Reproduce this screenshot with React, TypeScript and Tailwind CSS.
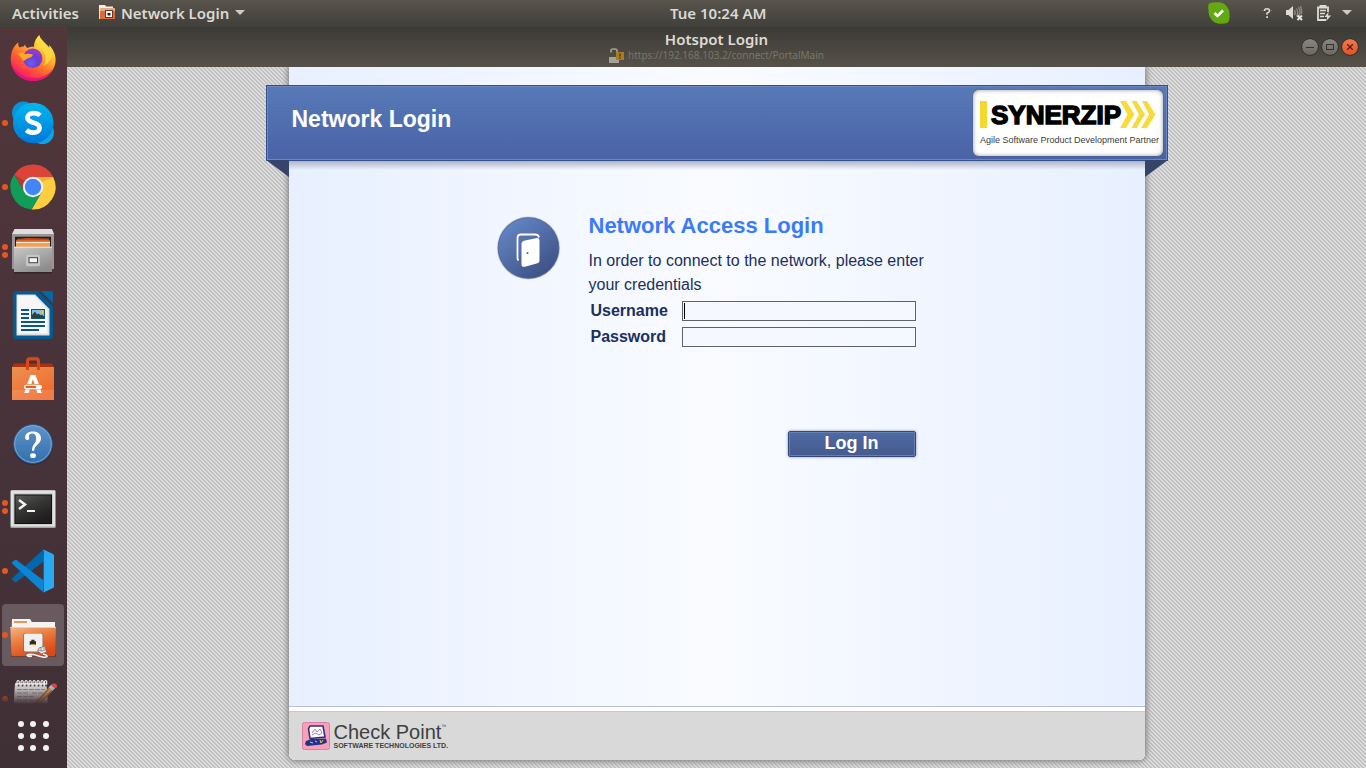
import type { ReactNode } from "react";

function Firefox() {
  return (
    <svg viewBox="0 0 48 48" className="size-12" aria-hidden="true">
      <defs>
        <linearGradient id="ffBody" x1="0.8" y1="0.1" x2="0.25" y2="0.95">
          <stop offset="0" stopColor="#fff04a" />
          <stop offset="0.3" stopColor="#ffb82e" />
          <stop offset="0.6" stopColor="#ff6a2c" />
          <stop offset="0.85" stopColor="#ff3350" />
          <stop offset="1" stopColor="#e6127c" />
        </linearGradient>
        <radialGradient id="ffGlobe" cx="0.4" cy="0.75" r="0.8">
          <stop offset="0" stopColor="#6a5cf0" />
          <stop offset="0.5" stopColor="#6b3fd0" />
          <stop offset="1" stopColor="#a733e0" />
        </radialGradient>
      </defs>
      <path d="M9.3 7.3C9 10 9.600 11.400 10.600 12.400c1.600-.8 3-1.100 4.200-1l1.300-2.100c.2 1.900.9 3 2.300 3.700 2-.8 4.200-1.400 6.600-1.200C25 6.500 27.500 2.500 30.300 0c1 4 4 6.500 6.700 9.300 1.300 1.300 2.200 2.500 2.900 3.900.5-1 .4-2 .2-3.200 4 4 6.500 9.500 6.500 14.500C46.600 36.800 36.500 46 24 46S1.800 36.500 1.800 24.500C1.800 17.500 4 11.500 9.300 7.300z" fill="url(#ffBody)" />
      <path d="M2.500 30C5 39.500 13.500 46 24 46c10.500 0 19-6.500 21.800-15.500C42.500 38 35 43 25.500 43 15.500 43 7 38.500 2.500 30z" fill="#e3107c" opacity=".8" />
      <circle cx="23.700" cy="23.300" r="9.700" fill="url(#ffGlobe)" />
      <path d="M27.500 14.500c3.500-1.500 7 1 8.500 4.500 1.800 4.500.5 9-2.500 12 6.500-2.300 10.500-8 9-14.500C41 11.500 35 8 31.500 3c-2.800 3-4.200 7.200-4 11.500z" fill="#ffd93f" opacity=".85" />
      <path d="M7.700 18.300c3-1.600 6.300-1 8.500.9 2.400-.8 5-.6 7.800.3-.4 2.200-2.700 3.300-5.200 3.800-1.800.8-2.600 2.600-4.800 2.400-1.400-3.200-3.500-5.500-6.300-7.400z" fill="#ffa52b" />
      <path d="M14 26c-1 3 1 6.500 4 7.500-3.500.5-7-1.500-8.500-4.500" fill="#ff5a3c" opacity=".6" />
    </svg>
  );
}

function Skype() {
  return (
    <svg viewBox="0 0 48 48" className="size-12" aria-hidden="true">
      <defs>
        <linearGradient id="skBody" x1="0" y1="0" x2="0" y2="1">
          <stop offset="0" stopColor="#00b7f1" />
          <stop offset="1" stopColor="#0078d7" />
        </linearGradient>
      </defs>
      <circle cx="14.500" cy="14" r="11.500" fill="#0a93d6" />
      <circle cx="33.500" cy="33.500" r="11.500" fill="#0fa4e6" />
      <circle cx="24.300" cy="24" r="20.300" fill="url(#skBody)" />
      <path d="M31.200 16.300c-1.800-1.600-4-2.200-6.500-2.200-3.600 0-6.200 1.700-6.200 4.700 0 2.900 2.400 3.900 6 4.900 3.800 1 6.100 2 6.100 5 0 3.200-2.700 4.900-6.300 4.900-2.700 0-5-.8-6.900-2.500" fill="none" stroke="#fff" strokeWidth="4.800" />
    </svg>
  );
}

function Chrome() {
  return (
    <svg viewBox="0 0 48 48" className="size-12" aria-hidden="true">
      <path d="M5.260 11.540A22.500 22.500 0 0 1 44.160 14H24L15.340 29z" fill="#db4437" />
      <path d="M44.160 14A22.500 22.500 0 0 1 22.580 46.460L32.660 29 24 14z" fill="#ffcd40" />
      <path d="M22.580 46.460A22.500 22.500 0 0 1 5.260 11.540L15.340 29h17.320z" fill="#0f9d58" />
      <path d="M24 14h20.160l-12 5.500z" fill="#b98a10" opacity=".35" />
      <path d="M5.260 11.540L15.340 29l.8-11z" fill="#3e2723" opacity=".25" />
      <circle cx="24" cy="24" r="10.200" fill="#f1f1f1" />
      <circle cx="24" cy="24" r="8.200" fill="#4285f4" />
    </svg>
  );
}

function Files() {
  return (
    <svg viewBox="0 0 48 48" className="size-12" aria-hidden="true">
      <defs>
        <linearGradient id="flFront" x1="0" y1="0" x2="0.6" y2="1">
          <stop offset="0" stopColor="#c9c9c9" />
          <stop offset="1" stopColor="#8d8d8d" />
        </linearGradient>
      </defs>
      <rect x="5" y="44" width="38" height="2.500" rx="1" fill="#20161a" opacity=".5" />
      <path d="M3 6.500h42V42H3z" fill="#979797" />
      <path d="M5.500 2h37.500L45 7H3z" fill="#dedede" />
      <rect x="6" y="9.700" width="36" height="11" fill="#25201d" />
      <path d="M8 12l10-1 22 .5V20H8z" fill="#c4461b" />
      <rect x="7" y="13.300" width="34" height="7" fill="#e37230" />
      <rect x="7" y="15" width="34" height="1.300" fill="#fff3e0" />
      <rect x="7" y="16.300" width="34" height="3.500" fill="#f5a04c" />
      <path d="M5 19.700h38V45H5z" fill="url(#flFront)" />
      <path d="M5 19.700h38v1H5z" fill="#e9e9e9" />
      <rect x="17" y="27.700" width="14" height="11.500" rx="1.500" fill="#c6c6c6" />
      <rect x="19.500" y="30.200" width="9.500" height="6" fill="#444" />
      <rect x="20.500" y="31.200" width="7.500" height="4" fill="#f4f4f4" />
    </svg>
  );
}

function Writer() {
  return (
    <svg viewBox="0 0 48 48" className="size-12" aria-hidden="true">
      <path d="M7 0h22l15 15.500V45a3 3 0 0 1-3 3H7a3 3 0 0 1-3-3V3a3 3 0 0 1 3-3z" fill="#045a92" />
      <path d="M30 0L44 14" stroke="#4a343a" strokeWidth="1.500" />
      <path d="M31.700 0H42a2 2 0 0 1 2 2v10.300z" fill="#0668a6" />
      <path d="M7.500 3.500h18.700L40.500 18v26.500h-33z" fill="#dedede" />
      <path d="M8.500 4.500h16.800L38.500 18.500v24h-30z" fill="#f7f7f7" />
      <path d="M12 18h8v2h-8zM12 22h8v2h-8zM12 26h8v2h-8zM12 30h24v2H12zM12 34h24v2H12zM12 38h18v2H12z" fill="#0b5687" />
      <rect x="22" y="18" width="14" height="10" fill="#0b5687" />
      <rect x="23" y="19" width="12" height="8" fill="#7fc0e8" />
      <circle cx="33" cy="21" r="1.700" fill="#eec12f" />
      <path d="M23 27v-3l3-3.500 2 3 1.500-1 2.500 2 1-1 2 2V27z" fill="#333b40" />
    </svg>
  );
}

function Software() {
  return (
    <svg viewBox="0 0 48 48" className="size-12" aria-hidden="true">
      <defs>
        <linearGradient id="swBag" x1="0" y1="0" x2="0.6" y2="1">
          <stop offset="0" stopColor="#eb9252" />
          <stop offset="1" stopColor="#f06a2c" />
        </linearGradient>
      </defs>
      <path d="M5 8.500h38l2 4H3z" fill="#a9320f" />
      <path d="M18.500 11V5.500q0-2.500 2.500-2.500h6q2.500 0 2.500 2.500V11" fill="none" stroke="#a93a16" strokeWidth="2.500" />
      <path d="M3 12h42v33H3z" fill="url(#swBag)" />
      <path d="M3 35h42v10H3z" fill="#fff" opacity=".12" />
      <path d="M18.500 15V6.500q0-2.500 2.500-2.500h6q2.500 0 2.500 2.500V15" fill="none" stroke="#d9481a" strokeWidth="3" />
      <path d="M21.500 20h5L29.800 29h-4.200L24 24l-1.600 5h-4.200zM16.500 34.500h4.300L19.600 38H15.200zM27.200 34.500h4.300l1.300 3.500h-4.400z" fill="#fff" />
      <rect x="15" y="29.800" width="18" height="4.400" rx="2.200" fill="#fff" />
      <rect x="16.300" y="31" width="11" height="2" rx="1" fill="#e95b22" />
    </svg>
  );
}

function Help() {
  return (
    <svg viewBox="0 0 48 48" className="size-12" aria-hidden="true">
      <defs>
        <linearGradient id="hpBall" x1="0" y1="0" x2="0" y2="1">
          <stop offset="0" stopColor="#6192c8" />
          <stop offset="1" stopColor="#2f71ae" />
        </linearGradient>
      </defs>
      <circle cx="24" cy="26" r="20" fill="#261a1e" opacity=".35" />
      <circle cx="24" cy="25" r="19.300" fill="url(#hpBall)" stroke="#2b5f94" />
      <circle cx="24" cy="25" r="18.300" fill="none" stroke="#86b0dc" strokeWidth=".8" />
      <path d="M16.200 19.300c-.6-4.500 3-6.900 7.600-6.900 5 0 8.200 2.600 8.200 6.800 0 5.800-6.500 6.400-6.800 12.600h-2.200c-.3-6.500 4.200-7.200 4.200-12.400 0-3-1.500-4.900-4-4.900-2 0-3.300.9-3.300 2.500 0 .8.300 1.200.3 1.900 0 1.300-.8 2.100-1.900 2.100-1.200 0-2-.7-2.100-1.700z" fill="#fff" />
      <ellipse cx="24" cy="36.700" rx="2.900" ry="2.400" fill="#fff" />
    </svg>
  );
}

function Terminal() {
  return (
    <svg viewBox="0 0 48 48" className="size-12" aria-hidden="true">
      <defs>
        <linearGradient id="tmScreen" x1="0" y1="0" x2="0.6" y2="1">
          <stop offset="0" stopColor="#5a5a58" />
          <stop offset="0.5" stopColor="#353534" />
          <stop offset="1" stopColor="#1e1e1e" />
        </linearGradient>
      </defs>
      <rect x="1.300" y="7" width="45.500" height="38" rx="1.500" fill="#a5a5a5" />
      <rect x="2" y="7.500" width="44" height="36" rx="1" fill="#e2e2e2" />
      <rect x="4.500" y="10.500" width="39" height="31" fill="#b5b5b5" />
      <rect x="5.500" y="11.500" width="37.500" height="29.500" fill="#111" />
      <rect x="6.500" y="12.500" width="35.500" height="27.500" fill="url(#tmScreen)" />
      <path d="M10 17l6 4.500-6 4.500" fill="none" stroke="#f2f2f2" strokeWidth="2.500" />
      <path d="M18 27h8v2h-8z" fill="#f2f2f2" />
    </svg>
  );
}

function Code() {
  return (
    <svg viewBox="0 0 48 48" className="size-12" aria-hidden="true">
      <path d="M3.300 31.300L33.700 3l1 11.500L7.500 35q-.8.600-1.600 0L3.300 33q-.9-.8 0-1.700z" fill="#0268ab" />
      <path d="M3.300 16.700q-.9-.8 0-1.600L5.900 13q.8-.6 1.600 0l27.200 20.500-1 11.500z" fill="#0c86d4" />
      <path d="M33.700 3q.5-.5 1.300-.2L44 7q1 .5 1 1.500v31q0 1-1 1.500l-9 4.200q-.8.300-1.500-.2 1.200.3 1.200-1.500v-39q0-1.500-1-1.500z" fill="#28a9f2" />
    </svg>
  );
}

function NetworkFolder() {
  return (
    <svg viewBox="0 0 48 48" className="size-12" aria-hidden="true">
      <defs>
        <linearGradient id="nfFront" x1="0" y1="0" x2="0.5" y2="1">
          <stop offset="0" stopColor="#f2b782" />
          <stop offset="0.5" stopColor="#ea7a3d" />
          <stop offset="1" stopColor="#dd4a16" />
        </linearGradient>
      </defs>
      <path d="M3 8h18l2 3h23v8H2.700z" fill="#f4f4f2" />
      <path d="M5 10h13v2H5z" fill="#ee935c" />
      <rect x="2" y="43" width="45" height="3" rx="1" fill="#2d1b1b" opacity=".5" />
      <path d="M1.300 16H47l-1 28.500q0 .8-1 .8H3.500q-1 0-1-.8z" fill="url(#nfFront)" />
      <path d="M1.300 16H47l-.1 1H1.400z" fill="#f9c9a0" />
      <rect x="14.300" y="22" width="20" height="19.500" rx="2" fill="#8b6a58" />
      <rect x="15" y="22.500" width="18.500" height="18" rx="1.500" fill="#f1f0ee" />
      <path d="M20.700 33.800v-3.500h1.600v-1.500h3.200v1.500H27v3.500z" fill="#2b2b28" />
      <path d="M22 33h4v1h-4z" fill="#c6a63f" />
      <path d="M30 37l6-2 1.500 6-5 2-4-3z" fill="#e9e9e7" stroke="#77716c" strokeWidth=".8" />
      <path d="M32 36.500v3M35 35.500v3M29 39l4 1 4-1.500" stroke="#77716c" strokeWidth=".7" fill="none" />
      <path d="M34 43c6 1 5 4 0 3-6-1-10-4-15-2.500-3 1 1 2.500 4 1.500" fill="none" stroke="#6d5c55" strokeWidth="2.500" />
      <path d="M34 43c6 1 5 4 0 3-6-1-10-4-15-2.500-3 1 1 2.500 4 1.500" fill="none" stroke="#f3f3f3" strokeWidth="1.500" />
    </svg>
  );
}

function Notes() {
  return (
    <svg viewBox="0 0 48 48" className="size-12" aria-hidden="true">
      <path d="M6 8h31.500L39 32H4.500z" fill="#c9c5c5" />
      <path d="M8 14.500h28M8 18h12M23 18h12M8 21.500h18M8 25h23" stroke="#8c8788" strokeWidth="1" strokeDasharray="5 1" />
      {[9, 13, 17, 21, 25, 29, 33, 36.500].map((x) => (
        <g key={x}>
          <circle cx={x + 0.500} cy="10.500" r="1" fill="#4a4143" />
          <path d={`M${x - 1} 10.500V6.500q1.200-2 2.200 0v3`} fill="none" stroke="#f2f2f2" strokeWidth="1.200" />
        </g>
      ))}
      <path d="M23 31L39.500 12.500l4 3.500L28 32z" fill="#a8723c" />
      <path d="M25.500 31L41 13.800l1.200 1L27 31.500z" fill="#dba05a" />
      <path d="M39.500 12.500l2.500-2.700 4 3.500-2.500 2.700z" fill="#aab3b8" />
      <path d="M42 9.800q2.500-2.200 4.500-1t1.500 3.500l-2 1z" fill="#e0414b" />
    </svg>
  );
}

type DockEntry = { name: string; icon: ReactNode; windows: number; active?: boolean };

const dock: DockEntry[] = [
  { name: "Firefox", icon: <Firefox />, windows: 0 },
  { name: "Skype", icon: <Skype />, windows: 1 },
  { name: "Chrome", icon: <Chrome />, windows: 1 },
  { name: "Files", icon: <Files />, windows: 2 },
  { name: "Writer", icon: <Writer />, windows: 0 },
  { name: "Software", icon: <Software />, windows: 0 },
  { name: "Help", icon: <Help />, windows: 0 },
  { name: "Terminal", icon: <Terminal />, windows: 2 },
  { name: "Code", icon: <Code />, windows: 1 },
  { name: "Network Login", icon: <NetworkFolder />, windows: 1, active: true },
  { name: "Notes", icon: <Notes />, windows: 1 },
];

function TopBar() {
  return (
    <header className="grid h-[27px] shrink-0 grid-cols-[calc(50%-13px)_auto_1fr] items-center bg-linear-to-b from-[#59554d] to-[#403f3a] pb-0.5 font-['Noto_Sans',sans-serif] text-[15px]/5 font-semibold text-[#dcd9d3]">
      <div className="flex items-center gap-5 pl-3">
        <button type="button">Activities</button>
        <button type="button" className="flex items-center gap-1.5">
          <svg viewBox="0 0 16 15" className="h-[15px] w-4" aria-hidden="true">
            <path d="M0 0h6l1 1.500h7V14H0z" fill="#f3efec" />
            <path d="M1 3h15v11H1z" fill="#dd6a3c" />
            <path d="M1 3h15v3H1z" fill="#eba983" />
            <rect x="6.500" y="5.500" width="7" height="7" fill="#fff" stroke="#5a3b30" />
            <rect x="8.500" y="8" width="3" height="2.500" fill="#222" />
          </svg>
          Network Login
          <svg viewBox="0 0 10 5" className="h-[5px] w-2.5" aria-hidden="true">
            <path d="M0 0h10L5 5z" fill="#cfccc6" />
          </svg>
        </button>
      </div>
      <button type="button">Tue 10:24 AM</button>
      <div className="flex items-center justify-end pr-3.5">
        <svg viewBox="0 0 22 22" className="mr-8 size-[22px]" aria-label="Online" role="img">
          <path d="M1 1.500Q5-.3 10 .3 15 0 18.500 4 22 8 21.500 13q.5 5-1.500 7.500-4 1.700-8 1.200-5 0-8.500-4Q0 13.500.6 9-.5 4 1 1.500z" fill="#62a912" />
          <path d="M6.500 11l3 3L15 8.500" fill="none" stroke="#fff" strokeWidth="2.500" />
        </svg>
        <svg viewBox="0 0 10 10" className="mr-3.5 h-2.5 w-2.5" aria-label="Network" role="img">
          <path d="M2.500 3q0-2.200 2.500-2.200T7.500 3Q7.500 4.200 5 5.200v1.600" fill="none" stroke="#dedbd5" strokeWidth="1.600" />
          <path d="M4.200 8.200h1.800V10H4.200z" fill="#dedbd5" />
          <path d="M.3 2v1M9.700 2v1" stroke="#9a9790" strokeWidth=".8" />
        </svg>
        <svg viewBox="0 0 17 16" className="mr-3.5 h-4 w-[17px]" aria-label="Muted" role="img">
          <path d="M0 5h2.500L7 1v13L2.500 10H0z" fill="#dedbd5" />
          <path d="M8.500 5q1.500 2.500 0 5M10.500 3.500q2.500 4 0 8M12.500 2q3 5.500 0 9.500M14.500 1q1.700 4 1 8" fill="none" stroke="#8c8982" strokeWidth="1.400" />
          <path d="M11.500 10.500l4.500 4.500M16 10.500L11.500 15" stroke="#e8e5df" strokeWidth="2" />
        </svg>
        <svg viewBox="0 0 15 16" className="mr-2.5 h-4 w-[15px]" aria-label="Battery" role="img">
          <path d="M3.500 0h5v2h-5zM9 15H1V2.500h10V7" fill="none" stroke="#dedbd5" strokeWidth="1.800" />
          <path d="M3 5.500h6M3 8.500h5M3 11.500h4" stroke="#dedbd5" strokeWidth="1.600" />
          <path d="M11.500 7L7.500 12h2.700l-1 4 5-5.500h-3z" fill="#dedbd5" />
        </svg>
        <svg viewBox="0 0 10 5" className="h-[5px] w-2.5" aria-hidden="true">
          <path d="M0 0h10L5 5z" fill="#cfccc6" />
        </svg>
      </div>
    </header>
  );
}

function Dock() {
  return (
    <nav className="flex w-[67px] shrink-0 flex-col bg-linear-to-b from-[#51363a] via-[#48333a] to-[#3f3035]">
      <ul className="min-h-0 flex-1 overflow-hidden mask-b-from-[calc(100%-16px)]">
        {dock.map((entry) => (
          <li key={entry.name} className="p-px pl-0.5">
            <button
              type="button"
              aria-label={entry.name}
              className={
                entry.active
                  ? "flex h-[62px] w-[62px] items-center rounded-sm bg-[#685a5e]"
                  : "flex h-[62px] w-[62px] items-center"
              }
            >
              <span className="flex w-[7px] shrink-0 flex-col gap-0.5">
                {Array.from({ length: entry.windows }, (_, i) => (
                  <span key={i} className="size-1.5 rounded-full bg-[#e95420]" />
                ))}
              </span>
              {entry.icon}
            </button>
          </li>
        ))}
      </ul>
      <button
        type="button"
        aria-label="Show applications"
        className="grid h-16 shrink-0 grid-cols-3 place-content-center justify-center gap-1.5 px-[18px]"
      >
        {Array.from({ length: 9 }, (_, i) => (
          <span key={i} className="size-1.5 rounded-full bg-[#f3f1f1]" />
        ))}
      </button>
    </nav>
  );
}

function TitleBar() {
  return (
    <div className="grid h-10 shrink-0 grid-cols-[1fr_auto_1fr] items-center bg-linear-to-b from-[#3b3a35] to-[#565249] font-['Noto_Sans',sans-serif]">
      <span />
      <div className="flex flex-col items-center pb-1">
        <h1 className="text-[15px]/5 font-semibold text-[#dfdbd2]">Hotspot Login</h1>
        <p className="flex h-3 items-center gap-1 text-[10px] text-[#7a756b]">
          <svg viewBox="0 0 15 15" className="size-[15px]" aria-hidden="true">
            <path d="M2 4.500V3q0-2 2-2h2q2 0 2 2v5" fill="none" stroke="#a5a29b" strokeWidth="1.600" />
            <path d="M0 9h10v6H0z" fill="#a5a29b" />
            <rect x="7" y="4" width="8" height="8" fill="#a97c1d" />
            <path d="M10.300 5.500h1.400v3h-1.400zM10.300 9.500h1.400v1.200h-1.400z" fill="#4a3a18" />
          </svg>
          https://192.168.103.2/connect/PortalMain
        </p>
      </div>
      <div className="flex justify-end gap-1 pr-2">
        <button type="button" aria-label="Minimize" className="flex size-4 items-center justify-center rounded-full bg-linear-to-b from-[#8a8780] to-[#6b6861] outline outline-[#35342f]">
          <span className="h-px w-2 bg-[#33322d]" />
        </button>
        <button type="button" aria-label="Maximize" className="flex size-4 items-center justify-center rounded-full bg-linear-to-b from-[#8a8780] to-[#6b6861] outline outline-[#35342f]">
          <span className="h-1.5 w-2 border border-[#33322d]" />
        </button>
        <button type="button" aria-label="Close" className="flex size-4 items-center justify-center rounded-full bg-linear-to-b from-[#f4784f] to-[#e2511f] outline outline-[#35342f]">
          <svg viewBox="0 0 6 6" className="size-1.5" aria-hidden="true">
            <path d="M0 0l6 6M6 0L0 6" stroke="#4a2313" strokeWidth="1.300" />
          </svg>
        </button>
      </div>
    </div>
  );
}

function SynerzipLogo() {
  return (
    <svg viewBox="0 0 190 66" className="h-[66px] w-[190px]" role="img" aria-label="Synerzip">
      <rect x="7" y="11" width="7" height="27" fill="#f5d82c" />
      <text x="18" y="34" fontFamily="'Liberation Sans', Arial, sans-serif" fontWeight="700" fontSize="26" fill="#000" stroke="#000" strokeWidth="1.500">
        SYNERZIP
      </text>
      <path d="M147 11h6l8.500 13.500L153 38h-6l7.500-13.500zM158.500 11h5l8.500 13.500-8.500 13.500h-5l7.500-13.500zM169 11h5l8.500 13.500L174 38h-6l8-13.500z" fill="#f7da3c" />
      <text x="7" y="53" fontFamily="'Liberation Sans', Arial, sans-serif" fontSize="9" fill="#3b3b3b">
        Agile Software Product Development Partner
      </text>
    </svg>
  );
}

function Banner() {
  return (
    <div className="relative -mx-[23px] mt-[18px] flex h-[76px] shrink-0 items-center justify-between border border-[#34508c] bg-linear-to-b from-[#5879b7] to-[#4963a6] pr-1 pl-[25px] shadow-[inset_0_0_0_1px_#6b88c3]">
      <h2 className="pb-2 text-[23px] font-bold text-white">Network Login</h2>
      <div className="rounded-md bg-white shadow-[inset_0_0_4px_#999999,0_0_1px_#444444]">
        <SynerzipLogo />
      </div>
      <svg viewBox="0 0 23 17" className="absolute top-full -left-px h-[17px] w-[23px]" aria-hidden="true">
        <path d="M0 0h23v17z" fill="#354469" />
      </svg>
      <svg viewBox="0 0 23 17" className="absolute top-full -right-px h-[17px] w-[23px]" aria-hidden="true">
        <path d="M23 0H0v17z" fill="#354469" />
      </svg>
    </div>
  );
}

function LoginForm() {
  return (
    <div className="flex flex-1 gap-[29px] bg-linear-to-b from-[#aeb4c4] to-transparent bg-size-[100%_9px] bg-no-repeat pt-[53px] pl-[207px]">
      <svg viewBox="0 0 64 64" className="mt-0.5 size-16 shrink-0" aria-hidden="true">
        <defs>
          <linearGradient id="doorDisc" x1="0.15" y1="0.1" x2="0.8" y2="0.95">
            <stop offset="0" stopColor="#6285c4" />
            <stop offset="1" stopColor="#3d5083" />
          </linearGradient>
        </defs>
        <circle cx="32.500" cy="32" r="31.500" fill="#8f96a5" opacity=".5" />
        <circle cx="32.500" cy="32" r="30.300" fill="url(#doorDisc)" stroke="#4a5f93" strokeWidth=".8" />
        <path d="M22.500 44.500q-1-.8-1-2.500V22q0-3.500 3.500-3.500h14q3.500 0 4 3" fill="none" stroke="#fff" strokeWidth="1.800" />
        <path d="M29 24.500l12-2.500q2.500-.3 2.500 2.500v20q0 2-2 2.700l-12.500 3.500q-3.500.8-3.500-2.500V28q0-2.900 3.500-3.500z" fill="#fff" />
        <circle cx="31.500" cy="37" r="1" fill="#4a5f93" />
      </svg>
      <form className="w-[340px] text-[#1c2f5e]" onSubmit={(e) => e.preventDefault()}>
        <h3 className="text-[22px]/6 font-bold text-[#3b7bfb]">Network Access Login</h3>
        <p className="mt-[11px] text-base/6">In order to connect to the network, please enter your credentials</p>
        <div className="mt-1 mr-[13px] grid grid-cols-[91px_1fr] items-center gap-y-1.5 pl-0.5">
          <label htmlFor="username" className="text-base/5 font-bold">Username</label>
          <span className="relative flex">
            <input id="username" type="text" className="h-5 w-full border border-[#5f6368] bg-[#f5f8ff] px-0.5 text-sm outline-none" />
            <span className="absolute top-0.5 left-0.5 h-4 w-px bg-black" />
          </span>
          <label htmlFor="password" className="text-base/5 font-bold">Password</label>
          <input id="password" type="password" className="h-5 w-full border border-[#5f6368] bg-[#f5f8ff] px-0.5 text-sm outline-none" />
        </div>
        <div className="mt-[84px] mr-[13px] flex justify-end">
          <button type="submit" className="h-[26px] w-32 rounded-xs border border-[#34477a] bg-linear-to-b from-[#4e6ba5] to-[#455a8d] pb-0.5 text-lg/5 font-bold text-white shadow-[inset_0_0_0_1px_#6680b5,0_0_3px_#888888]">
            Log In
          </button>
        </div>
      </form>
    </div>
  );
}

function Footer() {
  return (
    <footer className="shrink-0 rounded-b-md border-t border-[#b9c0cf] bg-white pt-1">
      <div className="flex h-[49px] items-center gap-1 rounded-b-md border-t border-[#c4c8d0] bg-[#d9d9d9] px-[13px]">
        <svg viewBox="0 0 28 28" className="size-7" aria-hidden="true">
          <rect x=".5" y=".5" width="27" height="27" rx="2" fill="#f9a0b8" stroke="#d880a5" />
          <path d="M8 4h13l2 11-15 1.500L6.500 7z" fill="#fff" stroke="#2c2f86" strokeWidth="1.600" />
          <path d="M10 11l3-4 2 3 3-3 2 4M10 13l4-2 3 2 3-2" fill="none" stroke="#a486b0" strokeWidth="1" />
          <path d="M4 19l5-2 15-.5 1 4-5 2-15 1.500-2-2z" fill="#26318c" />
          <path d="M18 18l1 3 2-3" fill="none" stroke="#d6d04c" />
          <path d="M8 20l3 1M13 19l2 1" stroke="#e6e6f2" strokeWidth=".8" />
        </svg>
        <div className="flex flex-col text-[#3f3f3f]">
          <span className="flex text-xl/5">
            Check Point<sup className="text-[5px]/3">™</sup>
          </span>
          <span className="text-[7px]/2 font-bold">SOFTWARE TECHNOLOGIES LTD.</span>
        </div>
      </div>
    </footer>
  );
}

export default function App() {
  return (
    <div className="flex h-screen flex-col overflow-hidden">
      <TopBar />
      <div className="flex min-h-0 flex-1">
        <Dock />
        <div className="flex min-w-0 flex-1 flex-col">
          <TitleBar />
          <main className="flex min-h-0 flex-1 justify-center overflow-hidden bg-[#c9c9c9] bg-[linear-gradient(45deg,#dddddd_25%,#c0c0c0_25%,#c0c0c0_50%,#dddddd_50%,#dddddd_75%,#c0c0c0_75%)] bg-size-[4px_4px] font-['Liberation_Sans',Arial,sans-serif]">
            <section className="mb-2 flex w-full max-w-[856px] flex-col rounded-b-md bg-linear-to-r from-[#e8f0ff] via-[#f9fbff] to-[#e8f0ff] shadow-[0_0_6px_1px_#777777]">
              <Banner />
              <LoginForm />
              <Footer />
            </section>
          </main>
        </div>
      </div>
    </div>
  );
}
